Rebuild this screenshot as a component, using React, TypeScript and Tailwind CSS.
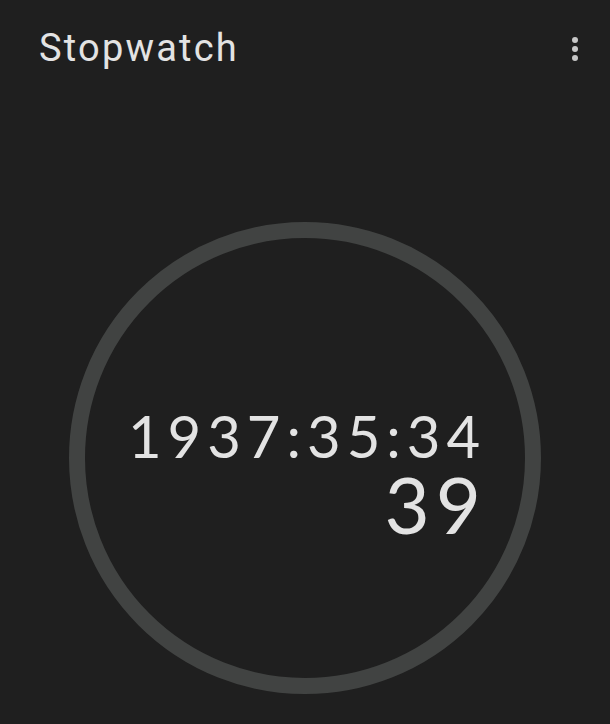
export default function App() {
  return (
    <div className="w-[610px] h-[724px] bg-[#1f1f1f] text-[#e3e3e3] flex flex-col overflow-hidden font-['Roboto',sans-serif]">
      <header className="flex items-start justify-between pl-[39px] pr-[30px] pt-[24px]">
        <h1 className="text-[38px] leading-[48px] tracking-[2.2px]">Stopwatch</h1>
        <button className="flex flex-col items-center gap-[3px] pt-[13px] px-[2px]" aria-label="More options">
          <span className="w-[6px] h-[6px] rounded-full bg-[#c7c7c7]" />
          <span className="w-[6px] h-[6px] rounded-full bg-[#c7c7c7]" />
          <span className="w-[6px] h-[6px] rounded-full bg-[#c7c7c7]" />
        </button>
      </header>

      <div className="flex justify-center pt-[150px]">
        <div className="w-[472px] h-[472px] rounded-full border-[16px] border-[#414342] flex items-center justify-center">
          <div className="flex flex-col items-end pt-[30px] pr-[2px] font-['Lato',sans-serif] tabular-nums">
            <span className="text-[58px] leading-[62px] tracking-[6px] -mr-[6px]">1937:35:34</span>
            <span className="text-[78px] leading-[74px] tracking-[6px] -mr-[7px]">39</span>
          </div>
        </div>
      </div>
    </div>
  )
}
